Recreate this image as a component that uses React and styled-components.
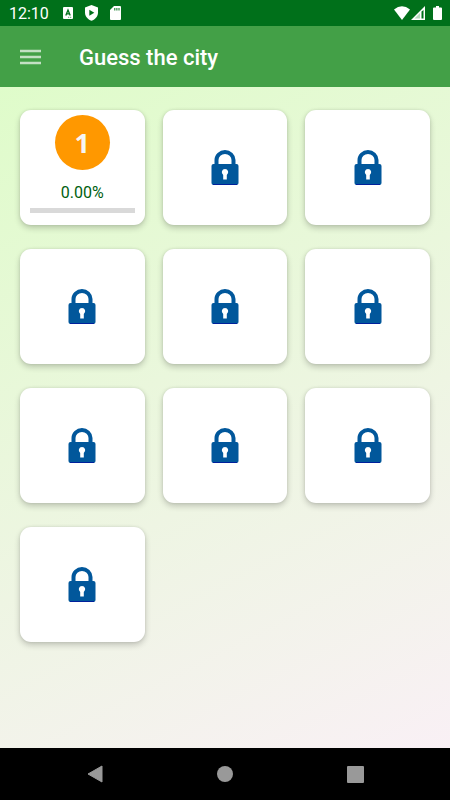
import styled, { createGlobalStyle } from "styled-components";

const GlobalStyle = createGlobalStyle`
  * {
    box-sizing: border-box;
  }

  body {
    margin: 0;
    font-family: Roboto, "Liberation Sans", sans-serif;
  }

  button {
    border: none;
    padding: 0;
    background: none;
    font-family: inherit;
    cursor: pointer;
  }
`;

const Screen = styled.div`
  min-height: 100vh;
  display: flex;
  flex-direction: column;
`;

const StatusBar = styled.div`
  height: 26px;
  padding: 0 8px 0 9px;
  display: flex;
  align-items: center;
  justify-content: space-between;
  background-color: #00701a;
  color: white;
`;

const StatusGroup = styled.div`
  display: flex;
  align-items: center;
  gap: ${(props) => props.$gap}px;
`;

const Clock = styled.time`
  margin-right: 2px;
  padding-top: 2px;
  font-size: 16px;
  line-height: 24px;
`;

const Header = styled.header`
  height: 61px;
  padding: 0 20px;
  display: flex;
  align-items: center;
  gap: 38px;
  background-color: #43a047;
`;

const MenuButton = styled.button`
  height: 40px;
  display: flex;
  align-items: center;
`;

const Title = styled.h1`
  margin: 0;
  padding-top: 2px;
  color: white;
  font-size: 22px;
  font-weight: 500;
  line-height: 28px;
`;

const Main = styled.main`
  flex: 1;
  padding: 23px 20px;
  background: linear-gradient(153deg, #dffcca 0%, #f9f0f5 100%);
`;

const Grid = styled.div`
  display: grid;
  grid-template-columns: repeat(3, 1fr);
  gap: 24px 18px;
`;

const Card = styled.button`
  height: 115px;
  display: flex;
  flex-direction: column;
  align-items: center;
  justify-content: ${(props) => (props.disabled ? "center" : "flex-start")};
  border-radius: 11px;
  && {
    padding: 5px 10px;
    background-color: white;
  }
  box-shadow: 0 3px 6px rgba(0, 0, 0, 0.2), 0 0 3px rgba(0, 0, 0, 0.1);
`;

const Badge = styled.span`
  width: 55px;
  height: 55px;
  flex: none;
  display: flex;
  align-items: center;
  justify-content: center;
  border-radius: 50%;
  background-color: #ff9800;
  color: #f5f5f5;
  font-family: "Open Sans", "Noto Sans", sans-serif;
  font-size: 27px;
  font-weight: 700;
`;

const Percent = styled.label`
  margin: 13px 0 5px;
  color: #00600f;
  font-size: 16px;
  line-height: 20px;
`;

const Progress = styled.progress`
  width: 100%;
  height: 5px;
  display: block;
  appearance: none;
  border: none;

  &::-webkit-progress-bar {
    background-color: #d9d9d9;
  }
  &::-webkit-progress-value {
    background-color: #43a047;
  }
`;

const NavBar = styled.nav`
  height: 52px;
  padding: 0 30px;
  display: grid;
  grid-template-columns: repeat(3, 1fr);
  background-color: black;
`;

const NavButton = styled.button`
  display: flex;
  align-items: center;
  justify-content: center;
`;

const LockIcon = () => (
  <svg width="28" height="36" viewBox="0 0 28 36" aria-hidden="true">
    <path
      d="M5.500 15V10a8.500 8 0 0 1 17 0V15"
      fill="none"
      stroke="#01579b"
      strokeWidth="4"
    />
    <rect x="0.500" y="14" width="27" height="21" rx="2" fill="#01579b" />
    <path d="M2 34.500h24" stroke="#00209b" />
    <path
      d="M14 19a3.300 3.300 0 0 1 1.800 6v4.500h-3.600V25A3.300 3.300 0 0 1 14 19z"
      fill="white"
    />
  </svg>
);

const MenuIcon = () => (
  <svg width="21" height="16" viewBox="0 0 21 16" aria-hidden="true">
    <path d="M0 2h21M0 8h21M0 14h21" stroke="#c3e0c4" strokeWidth="2.300" />
  </svg>
);

const KeyboardIcon = () => (
  <svg width="10" height="12" viewBox="0 0 10 12" aria-hidden="true">
    <rect width="10" height="12" rx="1" fill="white" />
    <path
      d="M2.800 8.500 5 3l2.200 5.500M3.500 6.800h3"
      fill="none"
      stroke="#00701a"
      strokeWidth="1.300"
    />
    <path d="M5.200 10.300h1M7.200 10.300h1" stroke="#00701a" strokeWidth="0.800" />
  </svg>
);

const ShieldIcon = () => (
  <svg width="13" height="16" viewBox="0 0 13 16" aria-hidden="true">
    <path
      d="M6.500 0 13 2.600V7.500c0 3.800-2.700 7-6.500 8.300C2.700 14.500 0 11.300 0 7.500V2.600z"
      fill="white"
    />
    <path d="M4.300 4.800v6l5-3z" fill="#00701a" />
  </svg>
);

const CardIcon = () => (
  <svg width="11" height="14" viewBox="0 0 11 14" aria-hidden="true">
    <path
      d="M4 0h6a1 1 0 0 1 1 1v12a1 1 0 0 1-1 1H1a1 1 0 0 1-1-1V4z"
      fill="white"
    />
    <path d="M4.800 2v2.500M6.900 2v2.500M9 2v2.500" stroke="#00701a" />
  </svg>
);

const WifiIcon = () => (
  <svg width="16" height="14" viewBox="0 0 16 14" aria-hidden="true">
    <path d="M0 3.500Q8-3 16 3.500L8 14z" fill="white" />
  </svg>
);

const SignalIcon = () => (
  <svg width="14" height="14" viewBox="0 0 14 14" aria-hidden="true">
    <path d="M0 14 14 0v14z" fill="white" />
    <path d="M10.500 5.500 12.500 4v8.500h-2z" fill="#00701a" />
    <path d="M3.500 12.500 9 7v5.500z" fill="#b8d8bf" />
  </svg>
);

const BatteryIcon = () => (
  <svg width="9" height="14" viewBox="0 0 9 14" aria-hidden="true">
    <path
      d="M3 0h3v1.500h2a1 1 0 0 1 1 1V13a1 1 0 0 1-1 1H1a1 1 0 0 1-1-1V2.500a1 1 0 0 1 1-1h2z"
      fill="white"
    />
  </svg>
);

const levels = [1, 2, 3, 4, 5, 6, 7, 8, 9, 10].map((id) => ({
  id,
  locked: id > 1,
  progress: 0,
}));

const LevelCard = ({ level }) => {
  if (level.locked) {
    return (
      <Card disabled aria-label={`Level ${level.id}, locked`}>
        <LockIcon />
      </Card>
    );
  }

  const progressId = `progress-${level.id}`;
  return (
    <Card>
      <Badge>{level.id}</Badge>
      <Percent htmlFor={progressId}>{level.progress.toFixed(2)}%</Percent>
      <Progress id={progressId} value={level.progress} max="100" />
    </Card>
  );
};

const App = () => (
  <>
    <GlobalStyle />
    <Screen>
      <StatusBar>
        <StatusGroup $gap={12}>
          <Clock>12:10</Clock>
          <KeyboardIcon />
          <ShieldIcon />
          <CardIcon />
        </StatusGroup>
        <StatusGroup $gap={8}>
          <StatusGroup $gap={1}>
            <WifiIcon />
            <SignalIcon />
          </StatusGroup>
          <BatteryIcon />
        </StatusGroup>
      </StatusBar>
      <Header>
        <MenuButton aria-label="Open menu">
          <MenuIcon />
        </MenuButton>
        <Title>Guess the city</Title>
      </Header>
      <Main>
        <Grid>
          {levels.map((level) => (
            <LevelCard key={level.id} level={level} />
          ))}
        </Grid>
      </Main>
      <NavBar>
        <NavButton aria-label="Back">
          <svg width="16" height="18" viewBox="0 0 16 18">
            <path
              d="M15 1v16L1 9z"
              fill="#999"
              stroke="#999"
              strokeLinejoin="round"
            />
          </svg>
        </NavButton>
        <NavButton aria-label="Home">
          <svg width="16" height="16" viewBox="0 0 16 16">
            <circle cx="8" cy="8" r="8" fill="#999" />
          </svg>
        </NavButton>
        <NavButton aria-label="Recent apps">
          <svg width="17" height="17" viewBox="0 0 17 17">
            <rect width="17" height="17" rx="1" fill="#999" />
          </svg>
        </NavButton>
      </NavBar>
    </Screen>
  </>
);

export default App;
